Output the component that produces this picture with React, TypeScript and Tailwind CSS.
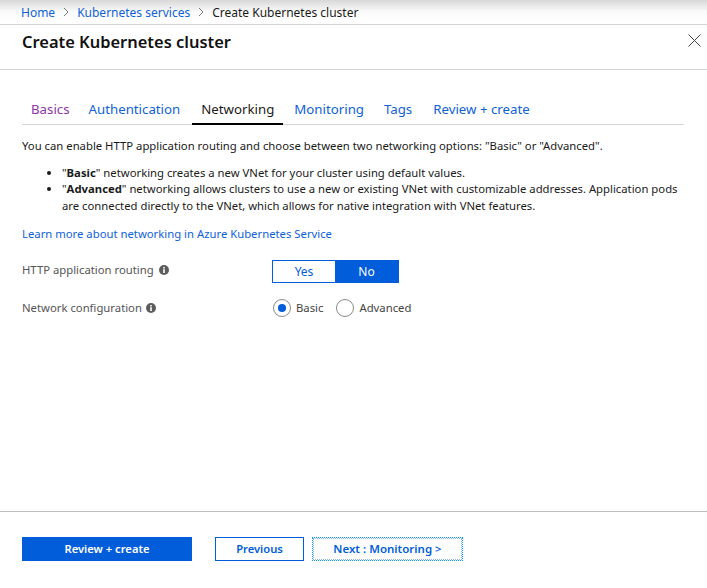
import React from "react";

const Info = ({ className }: { className: string }) => (
  <svg width="10" height="10" viewBox="0 0 10 10" className={className}>
    <circle cx="5" cy="5" r="5" fill="#5c5c5c" />
    <rect x="4.2" y="4.2" width="1.6" height="3.8" fill="#fff" />
    <rect x="4.2" y="2" width="1.6" height="1.5" fill="#fff" />
  </svg>
);

const Chevron = () => (
  <svg width="6" height="10" viewBox="0 0 6 10" className="shrink-0">
    <path d="M1 1l4 4-4 4" fill="none" stroke="#7a7a7a" strokeWidth="1" />
  </svg>
);

export default function App() {
  return (
    <div className="h-[588px] w-[707px] overflow-hidden bg-white text-[11.3px] text-[#1a1a1a] font-['Noto_Sans','Open_Sans',sans-serif] flex flex-col">
      <div className="h-[25px] shrink-0 border-b border-[#d4d4d4] bg-gradient-to-b from-[#d8d8d8] via-[#fbfbfb] via-50% to-white pl-[21px] flex items-center gap-[8px] text-[12px] leading-[23px]">
        <span className="text-[#0f62d6]">Home</span>
        <Chevron />
        <span className="text-[#0f62d6]">Kubernetes services</span>
        <Chevron />
        <span>Create Kubernetes cluster</span>
      </div>
      <div className="h-[45px] shrink-0 border-b border-[#d4d4d4] pl-[22px] pr-[6px] flex justify-between items-start">
        <h1 className="text-[16.45px] leading-[33px] font-semibold text-[#111]">Create Kubernetes cluster</h1>
        <svg width="13" height="13" viewBox="0 0 13 13" className="mt-[9px]">
          <path d="M.5.5l12 12M12.5.5l-12 12" stroke="#444" strokeWidth="1" fill="none" />
        </svg>
      </div>
      <div className="flex-1 pl-[22px] pr-[23px] pt-[26px] flex flex-col">
        <div className="flex h-[29px] border-b border-[#d4d4d4] text-[13.25px] text-[#0f62d6] leading-[27px] gap-[3px]">
          <span className="px-[9px] text-[#8f35a8]">Basics</span>
          <span className="px-[9px] ml-[-2px]">Authentication</span>
          <span className="px-[9px] text-[#1a1a1a] h-[29px] border-b-[2px] border-black">Networking</span>
          <span className="px-[9px] ml-[-1px]">Monitoring</span>
          <span className="px-[9px] ml-[-1px]">Tags</span>
          <span className="px-[9px]">Review + create</span>
        </div>
        <p className="mt-[13px] leading-[16px]">You can enable HTTP application routing and choose between two networking options: "Basic" or "Advanced".</p>
        <ul className="mt-[11px] list-disc pl-[40px] leading-[16.3px]">
          <li>"<b className="font-bold">Basic</b>" networking creates a new VNet for your cluster using default values.</li>
          <li>"<b className="font-bold">Advanced</b>" networking allows clusters to use a new or existing VNet with customizable addresses. Application pods are connected directly to the VNet, which allows for native integration with VNet features.</li>
        </ul>
        <a className="mt-[12px] leading-[16px] text-[#0f62d6]">Learn more about networking in Azure Kubernetes Service</a>
        <div className="mt-[18px] flex items-start h-[24px]">
          <div className="w-[250px] flex items-center text-[#555] leading-[16px] mt-[2px]">HTTP application routing<Info className="ml-[5px] mt-[1px] shrink-0" /></div>
          <div className="flex h-[23px] w-[127px] border border-[#015dda] text-[12px] leading-[21px] text-center">
            <span className="w-[62px] text-[#015dda]">Yes</span>
            <span className="flex-1 bg-[#015dda] text-white">No</span>
          </div>
        </div>
        <div className="mt-[16px] flex items-start">
          <div className="w-[250px] flex items-center text-[#555] leading-[16px]">Network configuration<Info className="ml-[4px] mt-[1px] shrink-0" /></div>
          <div className="flex items-center text-[#444] leading-[18px] mt-[-1px]">
            <span className="w-[18px] h-[18px] ml-[1px] rounded-full border border-[#8a8a8a] flex items-center justify-center">
              <span className="w-[8px] h-[8px] rounded-full bg-[#015dda]" />
            </span>
            <span className="ml-[5px]">Basic</span>
            <span className="w-[18px] h-[18px] ml-[13px] rounded-full border border-[#8a8a8a]" />
            <span className="ml-[5px]">Advanced</span>
          </div>
        </div>
      </div>
      <div className="h-[77px] shrink-0 border-t border-[#bdbdbd] pl-[22px] pt-[25px] flex items-start text-[11.2px] font-semibold">
        <button className="w-[170px] h-[24px] bg-[#015dda] text-white leading-[24px]">Review + create</button>
        <button className="w-[89px] h-[24px] ml-[23px] border border-[#015dda] text-[#015dda] leading-[22px]">Previous</button>
        <button className="w-[151px] h-[24px] ml-[8px] text-[11.5px] border border-dotted border-[#00a0e8] outline outline-1 outline-dotted outline-offset-[-2px] outline-[#8fb4e8] text-[#015dda] leading-[22px]">Next : Monitoring &gt;</button>
      </div>
    </div>
  );
}
